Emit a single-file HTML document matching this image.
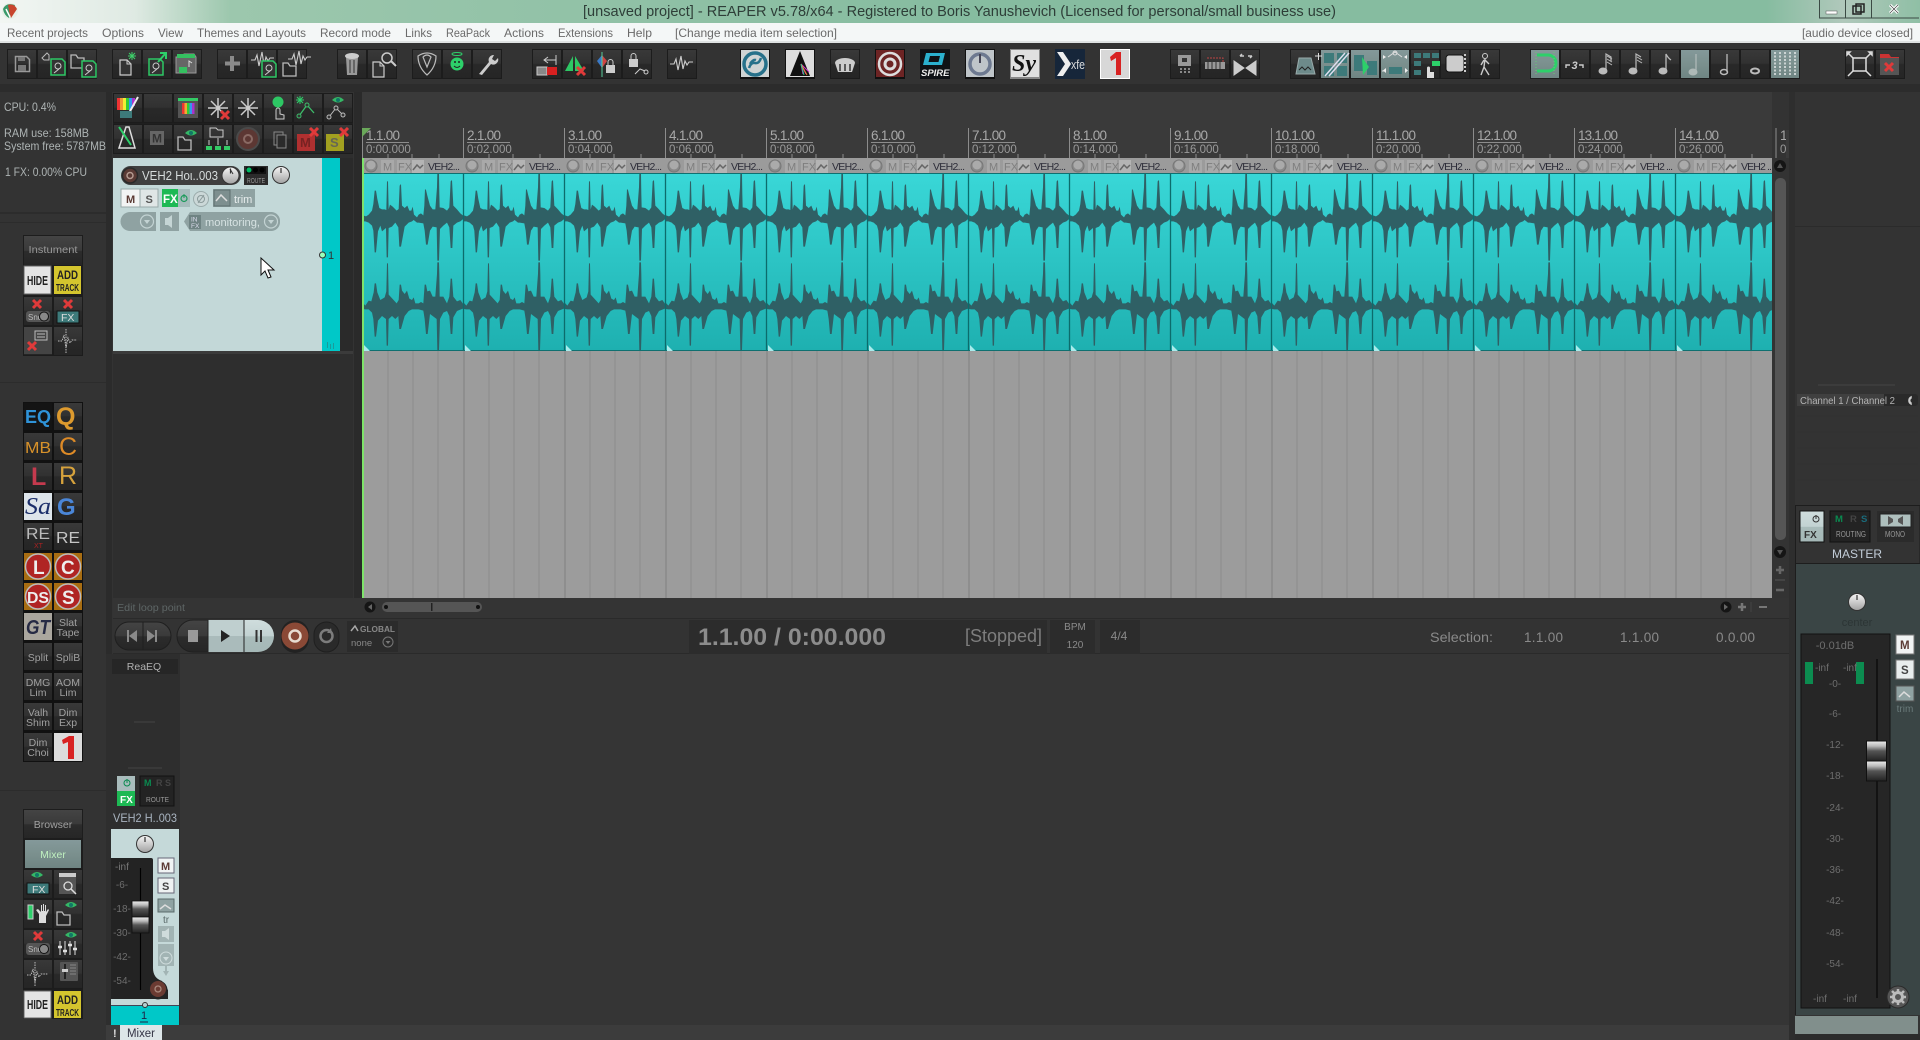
<!DOCTYPE html>
<html><head><meta charset="utf-8"><title>REAPER</title>
<style>
html,body{margin:0;padding:0;background:#333;overflow:hidden}
svg{display:block}
text{font-family:"Liberation Sans",sans-serif;font-size:12px}
.m{fill:#6a6a6a;font-size:12px}
.l{fill:#aeb4b4;font-size:12px}
.r1{fill:#a8a8a8;font-size:13.5px}
.r2{fill:#9a9a9a;font-size:11.5px}
.n{fill:#2c2c38;font-size:10.5px}
.d{fill:#6e6e6e;font-size:10px;text-anchor:middle}
.b{font-weight:bold}
</style></head><body>
<svg xmlns="http://www.w3.org/2000/svg" width="1920" height="1040" viewBox="0 0 1920 1040">
<defs>
<linearGradient id="gT" x1="0" x2="1" y1="0" y2="0"><stop offset="0" stop-color="#f2f6f3"/><stop offset=".07" stop-color="#dfeae3"/><stop offset=".12" stop-color="#9cc7ad"/><stop offset=".5" stop-color="#86bca0"/><stop offset=".92" stop-color="#86bca0"/><stop offset=".96" stop-color="#b0c8bb"/><stop offset="1" stop-color="#8fbfa5"/></linearGradient>
<linearGradient id="gW" x1="0" x2="0" y1="0" y2="1"><stop offset="0" stop-color="#39d7d7"/><stop offset="1" stop-color="#1eb0b0"/></linearGradient>
<linearGradient id="gB" x1="0" x2="0" y1="0" y2="1"><stop offset="0" stop-color="#393939"/><stop offset=".48" stop-color="#313131"/><stop offset=".5" stop-color="#292929"/><stop offset="1" stop-color="#252525"/></linearGradient>
<linearGradient id="gA" x1="0" x2="0" y1="0" y2="1"><stop offset="0" stop-color="#84999a"/><stop offset=".5" stop-color="#7b908e"/><stop offset="1" stop-color="#6f8583"/></linearGradient>
<linearGradient id="gM" x1="0" x2="0" y1="0" y2="1"><stop offset="0" stop-color="#eee"/><stop offset=".25" stop-color="#bbb"/><stop offset=".5" stop-color="#555"/><stop offset="1" stop-color="#222"/></linearGradient>
<linearGradient id="gK" x1="0" x2="0" y1="0" y2="1"><stop offset="0" stop-color="#f4f4f4"/><stop offset="1" stop-color="#a5a5a5"/></linearGradient>
<linearGradient id="gP" x1="0" x2="0" y1="0" y2="1"><stop offset="0" stop-color="#444"/><stop offset=".5" stop-color="#3a3a3a"/><stop offset=".52" stop-color="#2c2c2c"/><stop offset="1" stop-color="#262626"/></linearGradient>
<linearGradient id="gL" x1="0" x2="0" y1="0" y2="1"><stop offset="0" stop-color="#cfdddd"/><stop offset=".5" stop-color="#c2d2d2"/><stop offset=".52" stop-color="#a9bcbb"/><stop offset="1" stop-color="#a5b8b7"/></linearGradient>
<pattern id="gr" width="101" height="300" patternUnits="userSpaceOnUse" x="362" y="351">
<rect width="101" height="300" fill="#9c9c9c"/>
<path d="M1 0V300" stroke="#7f7f7f"/><path d="M26 0V300M51 0V300M76 0V300" stroke="#8d8d8d"/></pattern>

<g id="bt"><rect x=".5" y=".5" width="29" height="29" fill="url(#gB)" stroke="#1c1c1c"/></g>
<g id="ba"><rect x=".5" y=".5" width="29" height="29" fill="url(#gA)" stroke="#1c1c1c"/></g>
<g id="kn"><circle r="9" fill="#333"/><circle r="8" fill="url(#gK)"/><path d="M0-7V-2" stroke="#333" stroke-width="1.2"/></g>
<g id="fc"><rect x="-10" y="-20" width="20" height="20" fill="url(#gM)" stroke="#111"/><rect x="-10" y="0" width="20" height="20" fill="url(#gM)" stroke="#111"/></g>
<g id="dk"><path d="M1.500 1.500h11l3 3v12h-14z" fill="none" stroke="#999" stroke-width="1.500"/><path d="M4 2h7v4H4zM4 10h8v6H4z" fill="#777"/></g>
<g id="gd"><path d="M1 1h11l3 3v13H1z" fill="#333" stroke="#2dc764" stroke-width="1.500"/><circle cx="8" cy="8" r="3" fill="none" stroke="#ccc"/><path d="M4 15l5-4" stroke="#ccc"/></g>
<g id="fo"><path d="M1 15V2h5l2 3h6v10z" fill="none" stroke="#bbb" stroke-width="1.300"/></g>
<g id="dc"><path d="M1 1h7l4 4v11H1z" fill="#333" stroke="#ccc" stroke-width="1.200"/><path d="M8 1v4h4" fill="none" stroke="#ccc"/></g>
<g id="ex"><path d="M-4-4L4 4M4-4L-4 4" stroke="#e03a3a" stroke-width="3"/></g>
<g id="wv"><path d="M0 9h4l2-5 2 11 3-14 2 13 2-8 2 4 2-3h4" fill="none" stroke="#ccc" stroke-width="1.100"/></g>
<g id="ey"><path d="M0 4Q6-2 12 4Q6 9 0 4z" fill="#35b866"/><circle cx="6" cy="4" r="2" fill="#176"/></g>

<g id="wave">
<g transform="scale(.3333)" fill="#2f6065">
<polygon points="0,122 3,124 12,127 20,122 30,110 34,90 38,50 42,50 46,75 52,102 60,106 68,106 73,108 75,22 78,22 80,106 84,92 92,98 104,110 110,105 113,35 117,30 120,95 128,102 136,95 142,110 148,110 152,98 156,122 165,130 170,122 177,118 184,124 187,95 189,45 192,48 196,65 204,95 212,106 220,106 225,40 226,0 231,0 232,60 233,100 244,102 255,110 262,100 266,22 270,18 274,95 285,106 295,118 305,126 305,134 295,142 285,146 274,155 271,222 266,222 262,160 255,146 244,155 234,165 231,260 226,260 224,160 212,158 204,170 197,212 192,212 188,170 184,148 170,146 165,146 155,138 150,142 140,146 128,158 117,218 112,218 109,160 100,146 90,158 80,162 78,250 74,250 72,162 60,172 55,155 48,172 42,235 38,235 34,170 30,155 20,146 10,142 3,142 0,140"/>
<polygon points="0,385 3,387 10,395 20,380 28,382 35,355 38,328 42,328 46,355 55,378 68,370 73,352 75,268 78,268 80,362 92,375 104,388 110,378 113,332 117,332 120,350 128,360 135,350 142,374 150,378 155,370 160,388 170,388 177,384 184,388 188,332 192,332 196,352 204,350 212,368 220,368 225,300 226,265 231,265 232,300 233,368 244,368 255,388 262,368 266,314 270,314 274,368 285,382 295,378 305,392 305,403 295,407 285,411 274,430 271,480 266,480 262,426 255,411 244,416 234,435 231,528 226,528 224,435 212,426 204,420 197,480 192,480 188,435 184,410 170,406 160,406 150,406 140,411 128,426 117,465 112,465 109,426 100,435 90,426 80,435 78,515 74,515 72,435 60,426 48,440 42,488 38,488 34,435 30,416 20,406 10,406 3,405 0,405"/>
</g>
</g>
<g id="hd">
<rect width="101" height="16" fill="#9b9b9b"/>
<circle cx="9" cy="8" r="6" fill="#888" stroke="#777"/><circle cx="9" cy="7" r="4.500" fill="#aaa"/>
<rect x="19" y="2" width="13" height="13" fill="#a9a9a9"/><text x="21" y="12.500" fill="#7e7e7e" style="font-size:11px">M</text>
<rect x="35" y="2" width="13" height="13" fill="#a9a9a9"/><text x="36" y="12.500" fill="#7e7e7e" style="font-size:11px">FX</text>
<rect x="50" y="2" width="12" height="13" fill="#b4b4b4"/><path d="M51 12l4-5 3 3 3-3" fill="none" stroke="#666" stroke-width="1.500"/>
</g>
</defs>

<!-- base -->
<rect width="1920" height="1040" fill="#333"/>
<rect y="0" width="1920" height="23" fill="url(#gT)"/>
<rect y="23" width="1920" height="18" fill="#f4f7f7"/>
<rect y="41" width="1920" height="2" fill="#dfe2e2"/>
<rect y="43" width="1920" height="45" fill="#333"/>
<rect y="84" width="1920" height="8" fill="#2c2c2c"/>

<!-- title -->
<circle cx="10" cy="11" r="8" fill="#e8f0e8"/><path d="M3 9Q6 2 15 5L9 18Q4 15 3 9z" fill="#3a9a6a"/><path d="M8 5Q14 3 17 9L11 18Q9 12 8 5z" fill="#c8452e"/><path d="M6 9L10 17" stroke="#fff" stroke-width="1.500"/>
<text x="583" y="16" textLength="753" lengthAdjust="spacingAndGlyphs" style="font-size:14.500px" fill="#2e3e38">[unsaved project] - REAPER v5.78/x64 - Registered to Boris Yanushevich (Licensed for personal/small business use)</text>
<path d="M1819.500 0V18H1919M1845.500 0V18M1871.500 0V18" fill="none" stroke="#3b4a44"/>
<rect x="1826" y="11" width="11" height="3" fill="#fff" stroke="#555" stroke-width=".5"/>
<rect x="1853" y="6" width="8" height="8" fill="none" stroke="#222" stroke-width="1.500"/><rect x="1856" y="4" width="8" height="8" fill="none" stroke="#222" stroke-width="1.500"/>
<path d="M1890 5l8 8M1898 5l-8 8" stroke="#fff" stroke-width="3"/><path d="M1890 5l8 8M1898 5l-8 8" stroke="#333" stroke-width=".6"/>

<!-- menu -->
<text class="m" x="7" y="37" textLength="81" lengthAdjust="spacingAndGlyphs">Recent projects</text>
<text class="m" x="102" y="37" textLength="42" lengthAdjust="spacingAndGlyphs">Options</text>
<text class="m" x="158" y="37" textLength="25" lengthAdjust="spacingAndGlyphs">View</text>
<text class="m" x="197" y="37" textLength="109" lengthAdjust="spacingAndGlyphs">Themes and Layouts</text>
<text class="m" x="320" y="37" textLength="71" lengthAdjust="spacingAndGlyphs">Record mode</text>
<text class="m" x="405" y="37" textLength="27" lengthAdjust="spacingAndGlyphs">Links</text>
<text class="m" x="446" y="37" textLength="44" lengthAdjust="spacingAndGlyphs">ReaPack</text>
<text class="m" x="504" y="37" textLength="40" lengthAdjust="spacingAndGlyphs">Actions</text>
<text class="m" x="558" y="37" textLength="55" lengthAdjust="spacingAndGlyphs">Extensions</text>
<text class="m" x="627" y="37" textLength="25" lengthAdjust="spacingAndGlyphs">Help</text>
<text class="m" x="675" y="37" textLength="162" lengthAdjust="spacingAndGlyphs">[Change media item selection]</text>
<text class="m" x="1802" y="37" textLength="111" lengthAdjust="spacingAndGlyphs">[audio device closed]</text>

<!-- toolbar buttons -->
<g transform="translate(0,49)">
<use href="#bt" x="7"/><use href="#bt" x="37"/><use href="#bt" x="67"/>
<use href="#bt" x="112"/><use href="#bt" x="142"/><use href="#bt" x="172"/>
<use href="#bt" x="217"/><use href="#bt" x="247"/><use href="#bt" x="277"/>
<use href="#bt" x="337"/><use href="#bt" x="367"/>
<use href="#bt" x="412"/><use href="#bt" x="442"/><use href="#bt" x="472"/>
<use href="#bt" x="532"/><use href="#bt" x="562"/><use href="#bt" x="592"/><use href="#bt" x="622"/>
<use href="#bt" x="667"/>
<use href="#bt" x="1170"/><use href="#bt" x="1200"/><use href="#bt" x="1230"/>
<use href="#bt" x="1290"/><use href="#ba" x="1320"/><use href="#ba" x="1350"/><use href="#ba" x="1380"/><use href="#bt" x="1410"/><use href="#bt" x="1440"/><use href="#bt" x="1470"/>
<use href="#ba" x="1530"/><use href="#bt" x="1560"/><use href="#bt" x="1590"/><use href="#bt" x="1620"/><use href="#bt" x="1650"/><use href="#ba" x="1680"/><use href="#bt" x="1710"/><use href="#bt" x="1740"/><use href="#ba" x="1770"/>
<use href="#bt" x="1845"/><use href="#bt" x="1875"/>

<!-- icons group1 -->
<use href="#dk" x="14" y="6"/>
<path d="M42 9l5-5 2 2v5h-5z" fill="none" stroke="#bbb"/><use href="#gd" x="50" y="9"/>
<use href="#fo" x="70" y="4"/><use href="#gd" x="81" y="11"/>
<use href="#dc" x="119" y="10"/><path d="M132 3v8M128 7h8M129 4l6 6M135 4l-6 6" stroke="#3ed06a"/>
<use href="#gd" x="148" y="9"/><path d="M158 13l7-8M160 4h6v6" fill="none" stroke="#2dd06a" stroke-width="2"/>
<path d="M176 8h6l2-3h10l2 3v16h-20z" fill="#666" stroke="#999"/><rect x="177" y="5" width="18" height="4" fill="#35c060"/><rect x="179" y="18" width="8" height="6" fill="#35c060"/><path d="M189 18v-6l3 2" fill="none" stroke="#ddd"/>
<path d="M232 7v15M225 14.500h15" stroke="#8a8a8a" stroke-width="4"/>
<use href="#wv" x="251" y="2"/><use href="#gd" x="261" y="11"/>
<use href="#wv" x="288" y="1"/><use href="#fo" x="282" y="12"/>
<path d="M346 8h12l-1 18h-10z" fill="#999"/><ellipse cx="352" cy="7" rx="7" ry="3" fill="#ccc"/><path d="M350 11v13M354 11v13" stroke="#333"/>
<use href="#dc" x="372" y="12"/><circle cx="387" cy="9" r="5" fill="none" stroke="#ccc" stroke-width="1.500"/><path d="M391 12l5 5" stroke="#ccc" stroke-width="2"/>
<path d="M418 7Q427 1 436 7Q436 18 427 26Q418 18 418 7zM423 8Q427 4 431 8L427 18z" fill="none" stroke="#bbb" stroke-width="1.200"/>
<ellipse cx="457" cy="5" rx="5" ry="1.500" fill="none" stroke="#2dd06a"/><circle cx="457" cy="15" r="6.500" fill="#2dd06a"/><circle cx="455" cy="13" r="1" fill="#222"/><circle cx="459" cy="13" r="1" fill="#222"/><path d="M454 17q3 3 6 0" stroke="#222" fill="none"/>
<path d="M479 25l10-12a5 5 0 0 1 5-7l-2 4 3 2 3-3a5 5 0 0 1-7 6l-9 11z" fill="#ccc"/>
<rect x="537" y="18" width="10" height="8" fill="#888" stroke="#ccc"/><rect x="547" y="18" width="10" height="8" fill="#d82020"/><path d="M544 11h12M548 8l-4 3 4 3M556 6v10" stroke="#ccc" fill="none"/>
<path d="M565 22l8-15v15zM575 7l9 15h-9z" fill="#2dc764"/><use href="#ex" x="581" y="22"/>
<path d="M597 12l5-6v13z" fill="#3a7ac8"/><path d="M602 6l5 6-5 7z" fill="#d04444"/><path d="M602 3v25" stroke="#5c9"/><rect x="606" y="16" width="9" height="8" fill="#ccc"/><path d="M608 16v-3a2.500 2.500 0 0 1 5 0v3" fill="none" stroke="#ccc"/>
<rect x="629" y="10" width="9" height="8" fill="#ccc"/><path d="M631 10v-3a2.500 2.500 0 0 1 5 0v3" fill="none" stroke="#ccc"/><path d="M635 25l5-5 5 2" fill="none" stroke="#ccc"/><circle cx="646" cy="23" r="2" fill="none" stroke="#ccc"/>
<use href="#wv" x="670" y="6"/>

<!-- plugin tiles -->
<g>
<rect x="740" y="0" width="30" height="30" fill="#111"/><rect x="741" y="1" width="28" height="27" fill="#cfd4d4"/><circle cx="755" cy="15" r="11" fill="none" stroke="#27718a" stroke-width="3.500"/><path d="M749 19q2-6 6-5t6-5M750 15q3-5 6-4" fill="none" stroke="#27718a" stroke-width="2.500"/>
<rect x="785" y="0" width="30" height="30" fill="#111"/><rect x="786" y="1" width="28" height="27" fill="#ddd"/><path d="M800 2l10 25H790z" fill="#111"/><path d="M801 15l5 10M801 15l2 10M801 15l8 8" stroke="#c3c"/><path d="M801 15l6 11" stroke="#e83"/><path d="M801 15l3 11" stroke="#3c8"/>
<use href="#bt" x="830"/><path d="M835 14a10 5 0 0 1 20 0l-3 9h-14z" fill="#ccc"/><path d="M840 15v7M845 15v7M850 15v7" stroke="#333" stroke-width="1.500"/>
<rect x="875" y="0" width="30" height="30" fill="#111"/><rect x="876" y="1" width="28" height="27" fill="#6d2424"/><circle cx="890" cy="15" r="11" fill="none" stroke="#ddd" stroke-width="2.500"/><circle cx="890" cy="15" r="5" fill="none" stroke="#ddd" stroke-width="3"/>
<rect x="920" y="0" width="30" height="30" fill="#0f1216"/><path d="M926 4h19l-3 12h-19zM930 7l-1.500 6h10l1.500-6z" fill="#2bb0cf" fill-rule="evenodd"/><text x="921" y="27" fill="#eee" class="b" style="font-size:9.500px;font-style:italic">SPIRE</text>
<rect x="965" y="0" width="30" height="30" fill="#111"/><rect x="966" y="1" width="28" height="27" fill="#bfc5c9"/><circle cx="980" cy="15" r="10" fill="none" stroke="#6d7990" stroke-width="3.500"/><path d="M980 5v9" stroke="#445" stroke-width="2"/>
<rect x="1010" y="0" width="30" height="30" fill="#888"/><rect x="1011" y="1" width="28" height="27" fill="#e0e0e0"/><text x="1012" y="22" fill="#111" style="font-family:'Liberation Serif',serif;font-size:24px;font-style:italic;font-weight:bold">Sy</text>
<rect x="1055" y="0" width="30" height="30" fill="#16263a"/><path d="M1057 3l8 12-8 12h6l8-12-8-12z" fill="#eee"/><text x="1071" y="20" fill="#ddd" style="font-size:13px" textLength="14" lengthAdjust="spacingAndGlyphs">xfe</text>
<rect x="1100" y="0" width="30" height="30" fill="#fff"/><rect x="1101" y="1" width="28" height="28" fill="#d8d8d8"/><path d="M1110 8l6-5h5v23h-5V9l-5 3z" fill="#d82222"/>
</g>

<!-- right groups -->
<path d="M1178 6h13v11h-13zM1182 9h5v4h-5z" fill="#999" fill-rule="evenodd"/><path d="M1180 20h2M1184 20h2M1188 20h2M1180 23h2M1184 23h2M1188 23h2" stroke="#aaa" stroke-width="1.500"/>
<rect x="1205" y="13" width="20" height="7" fill="#999"/><path d="M1207 9h16v4" fill="none" stroke="#b44" stroke-dasharray="2 1"/><path d="M1208 13v7M1212 13v7M1216 13v7M1220 13v7" stroke="#333"/>
<path d="M1234 12v14l10-7zM1256 12v14l-10-7z" fill="#ccc" stroke="#ccc"/><path d="M1240 7h4M1252 7h-4M1240 7l2-2M1252 7l-2 2" stroke="#ccc" fill="none" stroke-width="1.500"/>

<path d="M1296 25l3-16h12l4 16z" fill="#6d8a8a" stroke="#9aa"/><path d="M1299 21l3-3 3 3 3-3 3 3" stroke="#222" fill="none"/><path d="M1315 7h7M1318.500 4v7" stroke="#ddd"/>
<rect x="1324" y="4" width="10" height="10" fill="#3d7a7a"/><rect x="1337" y="17" width="10" height="10" fill="#3d7a7a"/><rect x="1324" y="17" width="10" height="10" fill="#3d7a7a"/><rect x="1337" y="4" width="10" height="10" fill="#3d7a7a"/><path d="M1325 27l20-23M1329 27l20-23" stroke="#dde" stroke-width="1.500"/>
<rect x="1354" y="6" width="10" height="16" fill="#3d7a7a"/><rect x="1367" y="12" width="10" height="14" fill="#3d7a7a"/><path d="M1362 8l7 10-6 8z" fill="#2dd06a"/>
<path d="M1388 8l7-5 7 5M1383 8h2M1384 22h-2" fill="none" stroke="#ddd"/><circle cx="1395" cy="4" r="2" fill="none" stroke="#ddd"/><rect x="1389" y="18" width="13" height="7" fill="#3d7a7a"/><path d="M1386 19l-3 2.500 3 2.500M1405 19l3 2.500-3 2.500M1383 6v4l3-2zM1407 6v4l-3-2z" fill="#eee"/>
<g fill="#3d7a7a"><rect x="1414" y="4" width="7" height="5"/><rect x="1423" y="4" width="7" height="5"/><rect x="1432" y="4" width="7" height="5"/><rect x="1414" y="12" width="7" height="5"/><rect x="1414" y="21" width="7" height="5"/></g><rect x="1432" y="12" width="8" height="5" fill="#2dd06a"/><path d="M1427 27v-8a1.500 1.500 0 0 1 3 0v4h4v6h-7z" fill="#ddd"/>
<rect x="1446" y="6" width="18" height="17" rx="3" fill="#ccc" stroke="#111"/><path d="M1465 5v20" stroke="#ccc" stroke-dasharray="2 2" stroke-width="2"/>
<circle cx="1485" cy="7" r="2.500" fill="none" stroke="#ccc"/><path d="M1485 10l-1 8-3 8M1484 18l5 8M1485 11l4 4M1484 11l-3 5" fill="none" stroke="#ccc" stroke-width="1.400"/>

<path d="M1537 6h5M1537 22h5M1542 6h6a8 8 0 0 1 0 16h-6" fill="none" stroke="#2dd06a" stroke-width="3"/><path d="M1536 3v24M1554 3v24" stroke="#6c7" stroke-dasharray="1 2"/>
<text x="1571.500" y="20" fill="#ccc" class="b" style="font-size:11px;font-style:italic">3</text><path d="M1566 19v-3h4M1579 16h4v3" fill="none" stroke="#ccc" stroke-width="1.400"/>
<g fill="#bbb" stroke="#bbb"><ellipse cx="1603" cy="22" rx="4" ry="3"/><path d="M1606 22V5l5 3v4" fill="none" stroke-width="1.200"/><path d="M1607 7l5 3M1607 10l5 3M1607 13l5 3" fill="none"/>
<ellipse cx="1633" cy="22" rx="4" ry="3"/><path d="M1636 22V5l5 3" fill="none" stroke-width="1.200"/><path d="M1637 8l5 3M1637 11l5 3" fill="none"/>
<ellipse cx="1663" cy="22" rx="4" ry="3"/><path d="M1666 22V5q2 4 5 6" fill="none" stroke-width="1.300"/>
<ellipse cx="1693" cy="23" rx="4" ry="3" fill="#aeb9b7" stroke="#aeb9b7"/><path d="M1696 23V5" fill="none" stroke="#aeb9b7" stroke-width="1.300"/>
<ellipse cx="1724" cy="23" rx="3.500" ry="2.500" fill="none" stroke-width="1.500"/><path d="M1727 23V5" fill="none" stroke-width="1.300"/>
<ellipse cx="1755" cy="22" rx="4" ry="2.500" fill="none" stroke-width="2"/></g>
<path d="M1775 3v24M1780 3v24M1785 3v24M1790 3v24M1795 3v24" stroke="#e4e8e8" stroke-dasharray="2 1.500" stroke-width="1.500"/>
<rect x="1853" y="9" width="13" height="13" fill="none" stroke="#ddd" stroke-width="1.500"/><path d="M1848 4l5 5M1871 4l-5 5M1848 27l5-5M1871 27l-5-5M1847 3h3l-3 3zM1872 3h-3l3 3z" stroke="#ddd" stroke-width="1.500" fill="none"/>
<path d="M1880 5h9l2 3h8v18h-19z" fill="#c33"/><rect x="1880" y="9" width="19" height="17" fill="#555"/><use href="#ex" x="1889" y="18"/>
</g>

<!-- left info -->
<text class="l" x="4" y="111" textLength="52" lengthAdjust="spacingAndGlyphs">CPU: 0.4%</text>
<text class="l" x="4" y="137" textLength="85" lengthAdjust="spacingAndGlyphs">RAM use: 158MB</text>
<text class="l" x="4" y="150" textLength="102" lengthAdjust="spacingAndGlyphs">System free: 5787MB</text>
<text class="l" x="5" y="176" textLength="82" lengthAdjust="spacingAndGlyphs">1 FX: 0.00% CPU</text>
<rect x="0" y="212" width="106" height="2" fill="#2c2c2c"/>
<rect x="106" y="92" width="6" height="948" fill="#2b2b2b"/>
<rect x="0" y="222" width="106" height="1" fill="#2c2c2c"/>
<rect x="0" y="382" width="106" height="1" fill="#2c2c2c"/>
<rect x="0" y="790" width="106" height="1" fill="#2c2c2c"/>

<!-- track button rows -->
<rect x="113" y="93" width="240" height="60" fill="#1f1f1f"/>
<g transform="translate(113,93)">
<use href="#bt"/><use href="#bt" x="30"/><use href="#bt" x="60"/><use href="#bt" x="90"/><use href="#bt" x="120"/><use href="#bt" x="150"/><use href="#bt" x="180"/><use href="#bt" x="210"/>
<g transform="translate(0,31)"><use href="#bt"/><use href="#bt" x="30"/><use href="#bt" x="60"/><use href="#bt" x="90"/><use href="#bt" x="120"/><use href="#bt" x="150"/><use href="#bt" x="180"/><use href="#bt" x="210"/></g>
<!-- row 1 -->
<rect x="4" y="5" width="3" height="12" fill="#e33"/><rect x="7" y="5" width="3" height="12" fill="#e93"/><rect x="10" y="5" width="3" height="12" fill="#ee3"/><rect x="13" y="5" width="3" height="12" fill="#3c3"/><rect x="16" y="5" width="3" height="12" fill="#39e"/><rect x="19" y="5" width="3" height="8" fill="#a3c"/><path d="M25 4l-9 16" stroke="#eee" stroke-width="2"/><path d="M7 18h12v7H7z" fill="#3d7a7a"/>
<rect x="65" y="5" width="20" height="20" fill="#555"/><rect x="65" y="5" width="20" height="3" fill="#3c6"/><rect x="69" y="10" width="2.500" height="11" fill="#e33"/><rect x="71.500" y="10" width="2.500" height="11" fill="#ea3"/><rect x="74" y="10" width="2.500" height="11" fill="#3c3"/><rect x="76.500" y="10" width="2.500" height="11" fill="#39e"/><rect x="79" y="10" width="2.500" height="11" fill="#a3c"/>
<g stroke="#ccc" stroke-width="1.500" fill="none"><path d="M105 5v20M95 15h20M98 8l14 14M112 8L98 22"/><path d="M135 5v20M125 15h20M128 8l14 14M142 8l-14 14"/></g><use href="#ex" x="112" y="22"/>
<circle cx="165" cy="9" r="5.500" fill="#2dc764"/><path d="M163 26v-9a2 2 0 0 1 4 0v4l4 1v4z" fill="#333" stroke="#ccc"/>
<path d="M186 23l8-11 7 8" fill="none" stroke="#3dbd6a" stroke-width="1.300"/><path d="M187 3v8M183 7h8M184 4l6 6M190 4l-6 6" stroke="#2dd06a"/><circle cx="186" cy="23" r="2" fill="#333" stroke="#3dbd6a"/><circle cx="194" cy="12" r="2" fill="#333" stroke="#3dbd6a"/>
<use href="#ey" x="219" y="3"/><path d="M216 24l7-9 7 7" fill="none" stroke="#bbb"/><circle cx="216" cy="24" r="2" fill="#333" stroke="#bbb"/><circle cx="223" cy="15" r="2" fill="#333" stroke="#bbb"/><circle cx="230" cy="22" r="2" fill="#333" stroke="#bbb"/>
<!-- row 2 -->
<g transform="translate(0,31)">
<path d="M6 24L13 3h3l6 21z" fill="none" stroke="#ddd" stroke-width="1.500"/><path d="M6 3l12 18" stroke="#2dd06a" stroke-width="2"/>
<rect x="37" y="7" width="14" height="14" fill="#666"/><text x="39" y="18.500" fill="#333" class="b" style="font-size:12px">M</text>
<use href="#fo" x="64" y="11"/><use href="#ey" x="72" y="5"/>
<path d="M97 4h6l2 2h5v7H97z" fill="none" stroke="#ccc"/><rect x="93" y="22" width="6" height="4" fill="#3c6"/><rect x="102" y="22" width="6" height="4" fill="#3c6"/><rect x="111" y="22" width="6" height="4" fill="#3c6"/><path d="M96 21v-5M105 21v-7M114 21v-5" stroke="#ccc"/>
<circle cx="135" cy="15" r="11" fill="#5c3733" stroke="#4a4a4a" stroke-width="2"/><circle cx="135" cy="15" r="4" fill="none" stroke="#8a6a64" stroke-width="2"/>
<rect x="161" y="8" width="9" height="13" fill="none" stroke="#888"/><rect x="164" y="11" width="9" height="13" fill="#2b2b2b" stroke="#888"/>
<rect x="184" y="10" width="18" height="17" fill="#b03030"/><text x="187" y="23" fill="#722" class="b" style="font-size:13px">M</text><use href="#ex" x="201" y="8"/>
<rect x="213" y="10" width="18" height="17" fill="#a2a020"/><text x="217" y="23" fill="#665" class="b" style="font-size:13px">S</text><use href="#ex" x="231" y="8"/>
</g>
</g>

<!-- TCP -->
<rect x="113" y="154" width="240" height="444" fill="#2e2e2e"/>
<rect x="113" y="158" width="209" height="193" fill="#c3d8d8"/>
<rect x="322" y="158" width="18" height="193" fill="#00c8c8"/>
<rect x="340" y="158" width="13" height="193" fill="#2a2a2a"/>
<rect x="113" y="351" width="240" height="3" fill="#3b3b3b"/>
<rect x="121" y="166" width="120" height="19" rx="9.500" fill="#3f3f3f"/>
<circle cx="130" cy="175.500" r="7.500" fill="#5a3a34" stroke="#2a2a2a" stroke-width="1.500"/><circle cx="130" cy="175.500" r="3" fill="none" stroke="#b49a90" stroke-width="1.500"/>
<text x="142" y="180" textLength="76" lengthAdjust="spacingAndGlyphs" style="font-size:12.500px" fill="#d7dcdc">VEH2 Hoι..003</text>
<use href="#kn" x="230.500" y="175.500"/><path d="M230 169l3 5" stroke="#333"/>
<rect x="244" y="166" width="24" height="19" fill="#2b2b2b"/><rect x="246" y="167" width="20" height="7" fill="#111"/><circle cx="249" cy="170" r="2.500" fill="#0b6"/><circle cx="255.500" cy="170" r="2.500" fill="#000"/><circle cx="262" cy="170" r="2.500" fill="#000"/><text x="247" y="183" fill="#999" style="font-size:7.500px" textLength="18" lengthAdjust="spacingAndGlyphs">ROUTE</text>
<use href="#kn" x="281" y="175"/>
<rect x="121" y="189" width="19" height="18" fill="#f2f4f4" stroke="#9aa"/><text x="126" y="203" fill="#5b3a34" style="font-size:11px" class="b">M</text>
<rect x="140" y="189" width="18" height="18" fill="#dfe6e6" stroke="#9aa"/><text x="145.500" y="203" fill="#555" style="font-size:11px" class="b">S</text>
<rect x="162" y="189" width="16" height="18" fill="#1db954"/><text x="163" y="203" fill="#fff" class="b" style="font-size:11.500px">FX</text>
<rect x="178" y="189" width="12" height="18" fill="#a6bcbc"/><circle cx="184" cy="198.500" r="3" fill="none" stroke="#1a9a5a" stroke-width="1.200"/><path d="M184 194v4" stroke="#1a9a5a"/>
<circle cx="201" cy="199" r="7.500" fill="#cbd8d8" stroke="#9aabab"/><circle cx="201" cy="199" r="3.500" fill="none" stroke="#8a9a9a"/><path d="M198 203l6-8" stroke="#8a9a9a"/>
<rect x="213" y="189" width="42" height="18" fill="#8fa2a2"/><rect x="214" y="190" width="16" height="16" fill="#7d8f8f" stroke="#5d6f6f"/><path d="M216 201l5-6 6 6" fill="none" stroke="#ddd" stroke-width="1.500"/><text x="234" y="203" fill="#e8eeee" style="font-size:11px">trim</text>
<path d="M130 212h26v19h-26a9.500 9.500 0 0 1 0-19z" fill="#8fa2a2"/><circle cx="147" cy="221.500" r="6.500" fill="none" stroke="#c3d3d3" stroke-width="1.200"/><path d="M144 220h6l-3 4z" fill="#c3d3d3"/>
<rect x="160" y="212" width="19" height="19" fill="#8fa2a2"/><path d="M165 218h3l4-3v13l-4-3h-3z" fill="#c5d5d5"/>
<path d="M190 212h82a9 9 0 0 1 8 9.500a9 9 0 0 1-8 9.500h-82l-6-9.500z" fill="#8fa2a2"/><rect x="189" y="215" width="12" height="14" fill="#6f8383"/><text x="191" y="221.500" style="font-size:6.500px" fill="#dde">IN</text><text x="191" y="228" style="font-size:6.500px" fill="#dde">FX</text>
<text x="205" y="226" fill="#d6e2e2" style="font-size:11px" textLength="55" lengthAdjust="spacingAndGlyphs">monitoring,</text>
<circle cx="271" cy="221.500" r="6.500" fill="none" stroke="#c3d3d3" stroke-width="1.200"/><path d="M268 220h6l-3 4z" fill="#c3d3d3"/>
<circle cx="322.500" cy="255" r="3" fill="#9fb" stroke="#333"/><text x="328" y="259" style="font-size:11px" fill="#333">1</text>
<path d="M327 342h1v6h-1zM330 344h1v5h-1zM333 343h1v6h-1z" fill="#1a9a9a"/>
<path d="M261 258v17l4-4 3 7 3-1-3-7h6z" fill="#fff" stroke="#111" stroke-width="1"/>

<!-- arrange -->
<rect x="354" y="92" width="8" height="506" fill="#2a2a2a"/>
<rect x="362" y="92" width="1427" height="66" fill="#3a3a3a"/>
<rect x="362" y="351" width="1410" height="247" fill="url(#gr)"/>
<rect x="362" y="174" width="1410" height="177" fill="url(#gW)"/>
<rect x="1772" y="92" width="17" height="506" fill="#333"/>

<clipPath id="ac"><rect x="362" y="120" width="1410" height="232"/></clipPath>
<g clip-path="url(#ac)">
<g transform="translate(362,174)"><use href="#wave"/><use href="#wave" x="101"/><use href="#wave" x="202"/><use href="#wave" x="303"/><use href="#wave" x="404"/><use href="#wave" x="505"/><use href="#wave" x="606"/><use href="#wave" x="707"/><use href="#wave" x="808"/><use href="#wave" x="909"/><use href="#wave" x="1010"/><use href="#wave" x="1111"/><use href="#wave" x="1212"/><use href="#wave" x="1313"/></g>
<g transform="translate(362,158)"><use href="#hd"/><use href="#hd" x="101"/><use href="#hd" x="202"/><use href="#hd" x="303"/><use href="#hd" x="404"/><use href="#hd" x="505"/><use href="#hd" x="606"/><use href="#hd" x="707"/><use href="#hd" x="808"/><use href="#hd" x="909"/><use href="#hd" x="1010"/><use href="#hd" x="1111"/><use href="#hd" x="1212"/><use href="#hd" x="1313"/></g>
<path d="M463.500 174V351M564.500 174V351M665.500 174V351M766.500 174V351M867.500 174V351M968.500 174V351M1069.500 174V351M1170.500 174V351M1271.500 174V351M1372.500 174V351M1473.500 174V351M1574.500 174V351M1675.500 174V351" stroke="#0c6c6c" stroke-width="1.300"/>
<path d="M362 350.500H1772" stroke="#0f7070"/>
<path d="M362 173.500H1772" stroke="#0f7070"/>
<g fill="#a9ecec"><path d="M364 345l6 6h-6zM465 345l6 6h-6zM566 345l6 6h-6zM667 345l6 6h-6zM768 345l6 6h-6zM869 345l6 6h-6zM970 345l6 6h-6zM1071 345l6 6h-6zM1172 345l6 6h-6zM1273 345l6 6h-6zM1374 345l6 6h-6zM1475 345l6 6h-6zM1576 345l6 6h-6zM1677 345l6 6h-6z"/></g>
<text class="n" x="428" y="170" textLength="32">VEH2...</text><text class="n" x="529" y="170" textLength="32">VEH2...</text><text class="n" x="630" y="170" textLength="32">VEH2...</text><text class="n" x="731" y="170" textLength="32">VEH2...</text><text class="n" x="832" y="170" textLength="32">VEH2...</text><text class="n" x="933" y="170" textLength="32">VEH2...</text><text class="n" x="1034" y="170" textLength="32">VEH2...</text><text class="n" x="1135" y="170" textLength="32">VEH2...</text><text class="n" x="1236" y="170" textLength="32">VEH2...</text><text class="n" x="1337" y="170" textLength="32">VEH2...</text><text class="n" x="1438" y="170" textLength="33">VEH2 ...</text><text class="n" x="1539" y="170" textLength="33">VEH2 ...</text><text class="n" x="1640" y="170" textLength="33">VEH2 ...</text><text class="n" x="1741" y="170" textLength="33">VEH2 ...</text>
</g>
<!-- ruler -->
<path d="M362.500 128V158M463.500 128V158M564.500 128V158M665.500 128V158M766.500 128V158M867.500 128V158M968.500 128V158M1069.500 128V158M1170.500 128V158M1271.500 128V158M1372.500 128V158M1473.500 128V158M1574.500 128V158M1675.500 128V158M1776 128V158" stroke="#8c8c8c"/>
<path d="M366 142.500h43M467 142.500h43M568 142.500h43M669 142.500h43M770 142.500h43M871 142.500h43M972 142.500h43M1073 142.500h43M1174 142.500h43M1275 142.500h43M1376 142.500h43M1477 142.500h43M1578 142.500h43M1679 142.500h43" stroke="#8c8c8c"/>
<path d="M388 154v4M412 154v4M439 154v4M489 154v4M513 154v4M540 154v4M590 154v4M614 154v4M641 154v4M691 154v4M715 154v4M742 154v4M792 154v4M816 154v4M843 154v4M893 154v4M917 154v4M944 154v4M994 154v4M1018 154v4M1045 154v4M1095 154v4M1119 154v4M1146 154v4M1196 154v4M1220 154v4M1247 154v4M1297 154v4M1321 154v4M1348 154v4M1398 154v4M1422 154v4M1449 154v4M1499 154v4M1523 154v4M1550 154v4M1600 154v4M1624 154v4M1651 154v4M1701 154v4M1725 154v4M1752 154v4" stroke="#8c8c8c"/>
<text class="r1" x="366" y="140" textLength="34">1.1.00</text><text class="r2" x="366" y="153">0:00.000</text>
<text class="r1" x="467" y="140" textLength="34">2.1.00</text><text class="r2" x="467" y="153">0:02.000</text>
<text class="r1" x="568" y="140" textLength="34">3.1.00</text><text class="r2" x="568" y="153">0:04.000</text>
<text class="r1" x="669" y="140" textLength="34">4.1.00</text><text class="r2" x="669" y="153">0:06.000</text>
<text class="r1" x="770" y="140" textLength="34">5.1.00</text><text class="r2" x="770" y="153">0:08.000</text>
<text class="r1" x="871" y="140" textLength="34">6.1.00</text><text class="r2" x="871" y="153">0:10.000</text>
<text class="r1" x="972" y="140" textLength="34">7.1.00</text><text class="r2" x="972" y="153">0:12.000</text>
<text class="r1" x="1073" y="140" textLength="34">8.1.00</text><text class="r2" x="1073" y="153">0:14.000</text>
<text class="r1" x="1174" y="140" textLength="34">9.1.00</text><text class="r2" x="1174" y="153">0:16.000</text>
<text class="r1" x="1275" y="140" textLength="40">10.1.00</text><text class="r2" x="1275" y="153">0:18.000</text>
<text class="r1" x="1376" y="140" textLength="40">11.1.00</text><text class="r2" x="1376" y="153">0:20.000</text>
<text class="r1" x="1477" y="140" textLength="40">12.1.00</text><text class="r2" x="1477" y="153">0:22.000</text>
<text class="r1" x="1578" y="140" textLength="40">13.1.00</text><text class="r2" x="1578" y="153">0:24.000</text>
<text class="r1" x="1679" y="140" textLength="40">14.1.00</text><text class="r2" x="1679" y="153">0:26.000</text>
<text class="r1" x="1780" y="140">1</text><text class="r2" x="1780" y="153">0</text>
<rect x="1786" y="130" width="3" height="28" fill="#3a3a3a"/>
<path d="M362 128h9l-9 9z" fill="#6aa85a"/>
<rect x="362" y="158" width="2" height="440" fill="#7ee36a"/>

<!-- vscroll -->
<circle cx="1780" cy="166" r="6" fill="#151515"/><path d="M1777 168l3-5 3 5z" fill="#555"/>
<rect x="1775" y="178" width="11" height="362" rx="5" fill="#555"/>
<circle cx="1780" cy="552" r="6" fill="#151515"/><path d="M1777 550l3 5 3-5z" fill="#555"/>
<path d="M1776 570h8M1780 566v8" stroke="#666" stroke-width="2.500"/><path d="M1775 580h10" stroke="#555"/><path d="M1776 590h8" stroke="#666" stroke-width="2.500"/>

<!-- right side panel -->
<rect x="1789" y="92" width="6" height="948" fill="#2e2e2e"/>
<rect x="1795" y="92" width="125" height="413" fill="#333"/>
<rect x="1795" y="226" width="125" height="1" fill="#2b2b2b"/>
<path d="M1818 385h77" stroke="#444"/>
<rect x="1797" y="394" width="121" height="12" rx="3" fill="#2a2a2a"/><rect x="1797" y="394" width="87" height="12" fill="#404040"/>
<text x="1800" y="404" fill="#b5b5b5" style="font-size:10.500px" textLength="95" lengthAdjust="spacingAndGlyphs">Channel 1 / Channel 2</text>
<path d="M1911 397a4 4 0 0 0 0 7l0-1a3 3 0 0 1 0-5z" fill="#ccc" stroke="#ccc" stroke-width="1.500"/>
<path d="M1797 416h121M1797 432h121M1797 448h121M1797 464h121M1797 480h121" stroke="#303030"/>

<!-- master -->
<rect x="1795.500" y="505.500" width="124.500" height="509" fill="#333" stroke="#1d1d1d"/>
<rect x="1796" y="564" width="124" height="451" fill="#3a4545"/>
<path d="M1796 563.500H1920" stroke="#1d1d1d"/>
<rect x="1800" y="511" width="24" height="31" fill="url(#gL)" stroke="#111"/><text x="1804" y="538" fill="#333" style="font-size:10px" class="b">FX</text><circle cx="1816" cy="519" r="3" fill="none" stroke="#333"/><path d="M1816 515v4" stroke="#333"/>
<rect x="1830" y="511" width="40" height="31" fill="#232323" stroke="#111"/><text x="1835" y="522" fill="#0a8a50" class="b" style="font-size:9.500px">M</text><text x="1850" y="522" fill="#444" style="font-size:9.500px" class="b">R</text><text x="1861" y="522" fill="#1a6a7a" style="font-size:9.500px" class="b">S</text><text x="1836" y="537" fill="#999" style="font-size:8.500px" textLength="30" lengthAdjust="spacingAndGlyphs">ROUTING</text>
<rect x="1877" y="511" width="37" height="31" fill="#2b2b2b"/><rect x="1880" y="514" width="31" height="13" fill="#aebfbd" stroke="#222"/><path d="M1888 516v9l5-3v-3zM1903 516v9l-5-3v-3z" fill="#555"/><text x="1885" y="537" fill="#999" style="font-size:8.500px" textLength="20" lengthAdjust="spacingAndGlyphs">MONO</text>
<text x="1857" y="558" text-anchor="middle" fill="#c3cdd8" style="font-size:12px">MASTER</text>
<use href="#kn" x="1857" y="602"/>
<text x="1857" y="626" text-anchor="middle" fill="#2c3535" style="font-size:11px">center</text>
<rect x="1801" y="634" width="89" height="374" fill="#262626" stroke="#111"/>
<rect x="1805" y="662" width="8" height="22" fill="#0c8c50"/><rect x="1856" y="662" width="8" height="22" fill="#0c8c50"/>
<path d="M1877 659V998" stroke="#000"/>
<text x="1835" y="649" text-anchor="middle" fill="#6e6e6e" style="font-size:11px">-0.01dB</text>
<text x="1815" y="671" fill="#6e6e6e" style="font-size:10px">-inf</text><text x="1843" y="671" fill="#6e6e6e" style="font-size:10px">-inf</text>
<text class="d" x="1835" y="687">-0-</text><text class="d" x="1835" y="717">-6-</text><text class="d" x="1835" y="748">-12-</text><text class="d" x="1835" y="779">-18-</text><text class="d" x="1835" y="811">-24-</text><text class="d" x="1835" y="842">-30-</text><text class="d" x="1835" y="873">-36-</text><text class="d" x="1835" y="904">-42-</text><text class="d" x="1835" y="936">-48-</text><text class="d" x="1835" y="967">-54-</text>
<text class="d" x="1820" y="1002">-inf</text><text class="d" x="1850" y="1002">-inf</text>
<use href="#fc" x="1876.500" y="761"/>
<rect x="1896" y="635" width="18" height="19" fill="#f0f3f3" stroke="#777"/><text x="1900" y="649" fill="#5b3a34" class="b" style="font-size:11.500px">M</text>
<rect x="1896" y="660" width="18" height="19" fill="#e8eded" stroke="#777"/><text x="1901" y="674" fill="#444" class="b" style="font-size:11.500px">S</text>
<rect x="1896" y="686" width="18" height="15" fill="#8fa2a2" stroke="#555"/><path d="M1899 697l5-5 6 5" fill="none" stroke="#ddd" stroke-width="1.500"/><text x="1905" y="712" text-anchor="middle" fill="#6a7a7a" style="font-size:10px">trim</text>
<circle cx="1898" cy="997" r="11" fill="#555" stroke="#2b2b2b"/><circle cx="1898" cy="997" r="4.500" fill="none" stroke="#bbb" stroke-width="3"/><path d="M1898 989v3M1898 1002v3M1890 997h3M1903 997h3M1892 991l2 2M1902 1001l2 2M1904 991l-2 2M1894 1001l-2 2" stroke="#bbb" stroke-width="2.500"/>
<rect x="1795" y="1016" width="123" height="18" fill="#818f8c"/>
<rect x="1795" y="1034" width="125" height="6" fill="#2c2c2c"/>

<!-- left palette -->
<rect x="23" y="235" width="60" height="121" fill="#1d1d1d"/>
<rect x="24" y="236" width="58" height="29" fill="url(#gP)"/><text x="53" y="253" text-anchor="middle" fill="#999" style="font-size:10.500px" textLength="49" lengthAdjust="spacingAndGlyphs">Instument</text>
<rect x="24" y="266" width="27" height="28" fill="#e4e4e4" stroke="#666"/><text x="27" y="285" fill="#222" class="b" style="font-size:13px" textLength="21" lengthAdjust="spacingAndGlyphs">HIDE</text>
<rect x="54" y="266" width="27" height="28" fill="#d4c52e"/><text x="57" y="279" fill="#222" class="b" style="font-size:12px" textLength="21" lengthAdjust="spacingAndGlyphs">ADD</text><text x="56" y="291" fill="#222" class="b" style="font-size:10px" textLength="23" lengthAdjust="spacingAndGlyphs">TRACK</text>
<use href="#bt" x="23" y="296"/><use href="#bt" x="53" y="296"/><use href="#bt" x="23" y="326"/><use href="#bt" x="53" y="326"/>
<use href="#ex" x="37" y="304"/><use href="#ex" x="68" y="304"/>
<rect x="26" y="311" width="24" height="11" rx="3" fill="#555"/><text x="28" y="320" fill="#bbb" style="font-size:8px">Snd</text><circle cx="44" cy="316.500" r="4.500" fill="#888" stroke="#111"/>
<rect x="57" y="311" width="22" height="12" fill="#3d7a7a" stroke="#111"/><text x="61" y="321" fill="#ddd" style="font-size:10.500px">FX</text>
<rect x="24" y="327" width="28" height="27" fill="#444"/><rect x="35" y="331" width="12" height="9" fill="none" stroke="#bbb"/><path d="M37 334h8M37 337h8" stroke="#bbb"/><use href="#ex" x="32" y="346"/>
<path d="M58 341h4l2-6 2 13 2-10 2 5 2-3h5M66 329v24" fill="none" stroke="#bbb" stroke-dasharray="1.500 1"/>

<!-- plugin grid -->
<rect x="23" y="402" width="60" height="360" fill="#111"/>
<g transform="translate(23,402)">
<rect x="1" y="1" width="28" height="27" fill="#141414"/><rect x="31" y="1" width="28" height="27" fill="url(#gB)"/>
<rect x="1" y="31" width="28" height="27" fill="url(#gB)"/><rect x="31" y="31" width="28" height="27" fill="url(#gB)"/>
<rect x="1" y="61" width="28" height="27" fill="url(#gB)"/><rect x="31" y="61" width="28" height="27" fill="url(#gB)"/>
<rect x="1" y="91" width="28" height="27" fill="#dde4ea"/><rect x="31" y="91" width="28" height="27" fill="url(#gB)"/>
<rect x="1" y="121" width="28" height="27" fill="url(#gB)"/><rect x="31" y="121" width="28" height="27" fill="url(#gB)"/>
<rect x="1" y="151" width="28" height="27" fill="#a86d12"/><rect x="31" y="151" width="28" height="27" fill="#a86d12"/>
<rect x="1" y="181" width="28" height="27" fill="#a86d12"/><rect x="31" y="181" width="28" height="27" fill="#a86d12"/>
<rect x="1" y="211" width="28" height="27" fill="#aaa69e"/><rect x="31" y="211" width="28" height="27" fill="url(#gB)"/>
<rect x="1" y="241" width="28" height="27" fill="url(#gB)"/><rect x="31" y="241" width="28" height="27" fill="url(#gB)"/>
<rect x="1" y="271" width="28" height="27" fill="url(#gB)"/><rect x="31" y="271" width="28" height="27" fill="url(#gB)"/>
<rect x="1" y="301" width="28" height="27" fill="url(#gB)"/><rect x="31" y="301" width="28" height="27" fill="url(#gB)"/>
<rect x="1" y="331" width="28" height="28" fill="url(#gB)"/><rect x="31" y="331" width="28" height="28" fill="#dcdcdc"/>
<text x="2" y="21" fill="#2f93d8" class="b" style="font-size:18px" textLength="26" lengthAdjust="spacingAndGlyphs">EQ</text>
<text x="33" y="23" fill="#dd9a2e" class="b" style="font-size:25px">Q</text>
<text x="2" y="51" fill="#d8922a" style="font-size:16px" textLength="26" lengthAdjust="spacingAndGlyphs">MB</text>
<text x="36" y="53" fill="#dd8a26" style="font-size:25px">C</text>
<text x="8" y="83" fill="#c53a4e" class="b" style="font-size:25px">L</text>
<text x="36" y="82" fill="#d6a23c" style="font-size:25px">R</text>
<text x="2" y="112" fill="#1b2e6a" style="font-family:'Liberation Serif',serif;font-size:24px;font-style:italic" textLength="26" lengthAdjust="spacingAndGlyphs">Sa</text>
<text x="34" y="113" fill="#4a86d8" class="b" style="font-size:24px">G</text>
<text x="3" y="137" fill="#bbb" style="font-size:15.500px" textLength="24" lengthAdjust="spacingAndGlyphs">RE</text><text x="11" y="146" fill="#a22" style="font-size:7px">XT</text>
<text x="33" y="141" fill="#c5c5c5" style="font-size:15.500px" textLength="24" lengthAdjust="spacingAndGlyphs">RE</text>
<g stroke="#bbb" stroke-width="1.500" fill="#b02424"><circle cx="15" cy="164.500" r="12.500"/><circle cx="45" cy="164.500" r="12.500"/><circle cx="15" cy="194.500" r="12.500"/><circle cx="45" cy="194.500" r="12.500"/></g>
<text x="10" y="172" fill="#eee" class="b" style="font-size:19px">L</text><text x="38" y="172" fill="#eee" class="b" style="font-size:19px">C</text>
<text x="4" y="201" fill="#eee" class="b" style="font-size:16px" textLength="22" lengthAdjust="spacingAndGlyphs">DS</text><text x="39" y="202" fill="#eee" class="b" style="font-size:19px">S</text>
<text x="3" y="232" fill="#262a44" class="b" style="font-size:20px;font-style:italic" textLength="24" lengthAdjust="spacingAndGlyphs">GT</text>
<text x="45" y="224" text-anchor="middle" fill="#a0a0a0" style="font-size:10.500px">Slat</text><text x="45" y="234" text-anchor="middle" fill="#a0a0a0" style="font-size:10.500px">Tape</text>
<text x="15" y="259" text-anchor="middle" fill="#a0a0a0" style="font-size:10.500px">Split</text><text x="45" y="259" text-anchor="middle" fill="#a0a0a0" style="font-size:10.500px">SpliB</text>
<text x="15" y="284" text-anchor="middle" fill="#a0a0a0" style="font-size:10.500px">DMG</text><text x="15" y="294" text-anchor="middle" fill="#a0a0a0" style="font-size:10.500px">Lim</text>
<text x="45" y="284" text-anchor="middle" fill="#a0a0a0" style="font-size:10.500px">AOM</text><text x="45" y="294" text-anchor="middle" fill="#a0a0a0" style="font-size:10.500px">Lim</text>
<text x="15" y="314" text-anchor="middle" fill="#a0a0a0" style="font-size:10.500px">Valh</text><text x="15" y="324" text-anchor="middle" fill="#a0a0a0" style="font-size:10.500px">Shim</text>
<text x="45" y="314" text-anchor="middle" fill="#a0a0a0" style="font-size:10.500px">Dim</text><text x="45" y="324" text-anchor="middle" fill="#a0a0a0" style="font-size:10.500px">Exp</text>
<text x="15" y="344" text-anchor="middle" fill="#a0a0a0" style="font-size:10.500px">Dim</text><text x="15" y="354" text-anchor="middle" fill="#a0a0a0" style="font-size:10.500px">Choi</text>
<path d="M39 338l7-4h5v23h-6V340l-5 2z" fill="#d82222"/>
</g>

<!-- bottom palette -->
<rect x="23" y="809" width="60" height="210" fill="#1d1d1d"/>
<rect x="24" y="810" width="58" height="28" fill="url(#gP)"/><text x="53" y="828" text-anchor="middle" fill="#a0a0a0" style="font-size:10.500px">Browser</text>
<rect x="25" y="840" width="56" height="28" fill="url(#gA)"/><text x="53" y="858" text-anchor="middle" fill="#bff0bf" style="font-size:10.500px">Mixer</text>
<g transform="translate(23,869)">
<use href="#bt" y="0"/><use href="#bt" x="30"/><use href="#bt" y="30"/><use href="#bt" x="30" y="30"/><use href="#bt" y="60"/><use href="#bt" x="30" y="60"/><use href="#bt" y="90"/><use href="#bt" x="30" y="90"/>
<use href="#ey" x="8" y="2"/><rect x="4" y="14" width="22" height="11" fill="#3d7a7a" stroke="#111"/><text x="9" y="24" fill="#ddd" style="font-size:10.500px">FX</text>
<rect x="36" y="4" width="17" height="21" fill="#555"/><rect x="36" y="4" width="17" height="4" fill="#ccc"/><circle cx="45" cy="17" r="4" fill="none" stroke="#ddd" stroke-width="1.300"/><path d="M48 20l5 5" stroke="#ddd" stroke-width="1.500"/>
<rect x="5" y="36" width="5" height="14" fill="#2dd06a" stroke="#ccc"/><path d="M16 54v-9l-3-4 2-1 3 3v-7h1v6h1v-7h1v7h1v-6h1v7l2-3 1 1-3 6v7z" fill="#ddd"/>
<use href="#fo" x="33" y="41"/><use href="#ey" x="42" y="32"/>
<use href="#ex" x="15" y="67"/><rect x="3" y="74" width="24" height="12" rx="3" fill="#555"/><text x="5" y="83" fill="#bbb" style="font-size:8px">Snd</text><circle cx="21" cy="80" r="4.500" fill="#888" stroke="#111"/>
<use href="#ey" x="42" y="62"/><path d="M37 72v14M42 72v14M47 72v14M52 72v14" stroke="#ddd"/><path d="M35 78h4M40 82h4M45 76h4M50 80h4" stroke="#ddd" stroke-width="2.500"/>
<path d="M4 106h4l2-6 2 13 2-10 2 5 2-3h7M12 93v24" fill="none" stroke="#bbb" stroke-dasharray="1.500 1"/>
<rect x="37" y="93" width="18" height="19" rx="1" fill="#555"/><path d="M42 95v15" stroke="#222" stroke-width="2"/><rect x="39" y="100" width="6" height="3" fill="#ccc"/><path d="M47 96h6M47 99h6M47 102h6M47 105h6" stroke="#888"/>
</g>
<rect x="24" y="991" width="27" height="27" fill="#e4e4e4" stroke="#666"/><text x="27" y="1009" fill="#222" class="b" style="font-size:13px" textLength="21" lengthAdjust="spacingAndGlyphs">HIDE</text>
<rect x="54" y="991" width="27" height="27" fill="#d4c52e"/><text x="57" y="1004" fill="#222" class="b" style="font-size:12px" textLength="21" lengthAdjust="spacingAndGlyphs">ADD</text><text x="56" y="1016" fill="#222" class="b" style="font-size:10px" textLength="23" lengthAdjust="spacingAndGlyphs">TRACK</text>

<!-- below arrange -->
<rect x="113" y="598" width="1676" height="20" fill="#343434"/>
<text x="117" y="611" fill="#5e6666" style="font-size:10.500px" textLength="68" lengthAdjust="spacingAndGlyphs">Edit loop point</text>
<circle cx="370" cy="607" r="5.500" fill="#151515"/><path d="M372 604l-4 3 4 3z" fill="#666"/>
<rect x="382" y="602" width="100" height="10" rx="5" fill="#555"/><circle cx="386" cy="607" r="2" fill="#111"/><circle cx="478" cy="607" r="2" fill="#111"/><rect x="431" y="603" width="1.500" height="8" fill="#222"/>
<circle cx="1726" cy="607" r="5.500" fill="#151515"/><path d="M1724 604l4 3-4 3z" fill="#666"/><path d="M1738 607h8M1742 603v8" stroke="#777" stroke-width="2.500"/><path d="M1751 602v10" stroke="#444"/><path d="M1759 607h8" stroke="#777" stroke-width="2"/>
<path d="M113 618.500H1789M113 653.500H1789" stroke="#2a2a2a"/>

<!-- transport -->
<rect x="115" y="622" width="56" height="28" rx="14" fill="url(#gP)" stroke="#1f1f1f"/><path d="M143 622v28" stroke="#1f1f1f"/>
<path d="M127 630v12h2v-12zM137 630l-8 6 8 6zM157 630v12h-2v-12zM147 630l8 6-8 6z" fill="#8a8a8a"/>
<path d="M193 620h15v32h-15a16 16 0 0 1 0-32z" fill="url(#gP)" stroke="#1f1f1f"/>
<rect x="208" y="620" width="36" height="32" fill="#aabbbb"/><rect x="208" y="620" width="36" height="16" fill="#bfcfcf"/>
<path d="M244 620h14a16 16 0 0 1 0 32h-14z" fill="url(#gL)"/><path d="M244 620v32M208 620v32" stroke="#222"/>
<rect x="188" y="630" width="10" height="12" fill="#999"/>
<path d="M221 630l9 6-9 6z" fill="#222"/>
<path d="M256.500 630v12M261 630v12" stroke="#333" stroke-width="2"/>
<rect x="281" y="620" width="28" height="33" rx="14" fill="#222"/><circle cx="295" cy="636" r="13.500" fill="#8a4936"/><circle cx="295" cy="636" r="5.500" fill="none" stroke="#e8dcd0" stroke-width="2.500"/>
<rect x="314" y="622" width="25" height="30" rx="12.500" fill="#2a2a2a" stroke="#1f1f1f"/><circle cx="326.500" cy="636" r="6" fill="none" stroke="#7c7c7c" stroke-width="2.500"/><path d="M331 628l1 5-5 0z" fill="#7c7c7c"/>
<rect x="347" y="621" width="51" height="31" fill="#2b2b2b"/><path d="M351 631l4-5 3 5" fill="none" stroke="#aaa" stroke-width="1.500"/><text x="360" y="632" fill="#888" style="font-size:8.500px" class="b" textLength="35" lengthAdjust="spacingAndGlyphs">GLOBAL</text>
<text x="351" y="646" fill="#888" style="font-size:9.500px">none</text><circle cx="388" cy="642" r="5" fill="none" stroke="#777"/><path d="M385.500 641h5l-2.500 3z" fill="#777"/>
<rect x="689" y="620" width="358" height="34" fill="#2c2c2c"/>
<rect x="1050" y="620" width="45" height="34" fill="#2c2c2c"/>
<rect x="1100" y="620" width="40" height="34" fill="#2c2c2c"/>
<text x="698" y="645" fill="#8c8c8c" class="b" style="font-size:24px" textLength="188" lengthAdjust="spacingAndGlyphs">1.1.00 / 0:00.000</text>
<text x="965" y="642" fill="#7e7e7e" style="font-size:18px" textLength="77" lengthAdjust="spacingAndGlyphs">[Stopped]</text>
<text x="1075" y="630" text-anchor="middle" fill="#8a8a8a" style="font-size:10px">BPM</text>
<text x="1075" y="648" text-anchor="middle" fill="#8a8a8a" style="font-size:10px">120</text>
<text x="1119" y="640" text-anchor="middle" fill="#8a8a8a" style="font-size:12px">4/4</text>
<text x="1430" y="642" fill="#8a8a8a" style="font-size:13.500px" textLength="63" lengthAdjust="spacingAndGlyphs">Selection:</text>
<text x="1524" y="642" fill="#8a8a8a" style="font-size:13.500px" textLength="39">1.1.00</text>
<text x="1620" y="642" fill="#8a8a8a" style="font-size:13.500px" textLength="39">1.1.00</text>
<text x="1716" y="642" fill="#8a8a8a" style="font-size:13.500px" textLength="39">0.0.00</text>

<!-- mixer strip -->
<rect x="106" y="654" width="74" height="386" fill="#2e2e2e"/>
<rect x="180" y="654" width="1609" height="371" fill="#353535"/>
<rect x="112" y="659" width="66" height="15" fill="#262626"/><text x="144" y="670" text-anchor="middle" fill="#b0b0b0" style="font-size:10.500px">ReaEQ</text>
<path d="M134 722h21M128 768h34" stroke="#444"/>
<rect x="117" y="776" width="18" height="15" fill="#a9bcbc"/><rect x="117" y="791" width="18" height="15" fill="#1db954"/><text x="120" y="803" fill="#fff" class="b" style="font-size:10px">FX</text><circle cx="127" cy="783" r="3" fill="none" stroke="#0a8a50"/><path d="M127 779v4" stroke="#0a8a50"/>
<rect x="140" y="776" width="34" height="30" fill="#232323" stroke="#111"/><text x="144" y="786" fill="#0a8a50" class="b" style="font-size:9px">M</text><text x="156" y="786" fill="#444" class="b" style="font-size:9px">R</text><text x="165" y="786" fill="#444" class="b" style="font-size:9px">S</text><text x="146" y="802" fill="#999" style="font-size:7.500px" textLength="23" lengthAdjust="spacingAndGlyphs">ROUTE</text>
<text x="145" y="822" text-anchor="middle" fill="#a9b4c0" style="font-size:12px" textLength="64" lengthAdjust="spacingAndGlyphs">VEH2 H..003</text>
<rect x="111" y="829" width="68" height="176" fill="#c5d9d9"/>
<use href="#kn" x="145" y="844"/>
<path d="M111 858H151Q153 858 153 860V968Q153 978 162 981L168 990V999H111Z" fill="#232323"/>
<path d="M140.500 868V990" stroke="#000" stroke-width="1.200"/>
<text x="115" y="870" fill="#777" style="font-size:10px">-inf</text><text class="d" x="122" y="888">-6-</text><text class="d" x="122" y="912">-18-</text><text class="d" x="122" y="936">-30-</text><text class="d" x="122" y="960">-42-</text><text class="d" x="122" y="984">-54-</text>
<use href="#fc" transform="translate(140.500,917) scale(.85,.8)"/>
<rect x="158" y="858" width="16" height="15" fill="#f0f4f4" stroke="#667"/><text x="161" y="870" fill="#5b3a34" class="b" style="font-size:11px">M</text>
<rect x="158" y="878" width="16" height="15" fill="#eef2f2" stroke="#667"/><text x="162" y="890" fill="#444" class="b" style="font-size:11px">S</text>
<rect x="158" y="899" width="16" height="13" fill="#8fa2a2" stroke="#5a6a6a"/><path d="M160 909l5-4 6 4" fill="none" stroke="#ddd" stroke-width="1.500"/><text x="166" y="923" text-anchor="middle" fill="#5a6a6a" style="font-size:10px">tr</text>
<rect x="158" y="926" width="16" height="16" fill="#a2b4b4"/><path d="M162 931h3l4-3v12l-4-3h-3z" fill="#cfdcdc"/>
<rect x="158" y="944" width="16" height="22" fill="#a2b4b4"/><circle cx="166" cy="958" r="6" fill="none" stroke="#cfdcdc"/><path d="M163 957h6l-3 4z" fill="#cfdcdc"/><path d="M166 966v5" stroke="#a2b4b4" stroke-width="2"/><path d="M163 971h6l-3 5z" fill="#a2b4b4"/>
<circle cx="158" cy="990" r="9.500" fill="#242424"/><circle cx="158" cy="989" r="8" fill="#6b3b32"/><circle cx="158" cy="989" r="3" fill="none" stroke="#a8887c" stroke-width="1.300"/>
<rect x="111" y="1006" width="68" height="19" fill="#00c8c8"/><path d="M111 1005.500H179" stroke="#445"/><circle cx="145" cy="1005" r="2.500" fill="#b6d0d0" stroke="#333"/><text x="144" y="1019" text-anchor="middle" fill="#224" style="font-size:11px">1</text><path d="M140 1022h8" stroke="#224"/>

<!-- tabs -->
<rect x="106" y="1025" width="1683" height="15" fill="#3c3c3c"/>
<text x="113" y="1037" fill="#ddd" style="font-size:11px" class="b">!</text>
<rect x="120" y="1025" width="42" height="15" fill="#dde6e8"/><text x="127" y="1037" fill="#334" style="font-size:11.500px" textLength="28" lengthAdjust="spacingAndGlyphs">Mixer</text>
</svg>
</body></html>
